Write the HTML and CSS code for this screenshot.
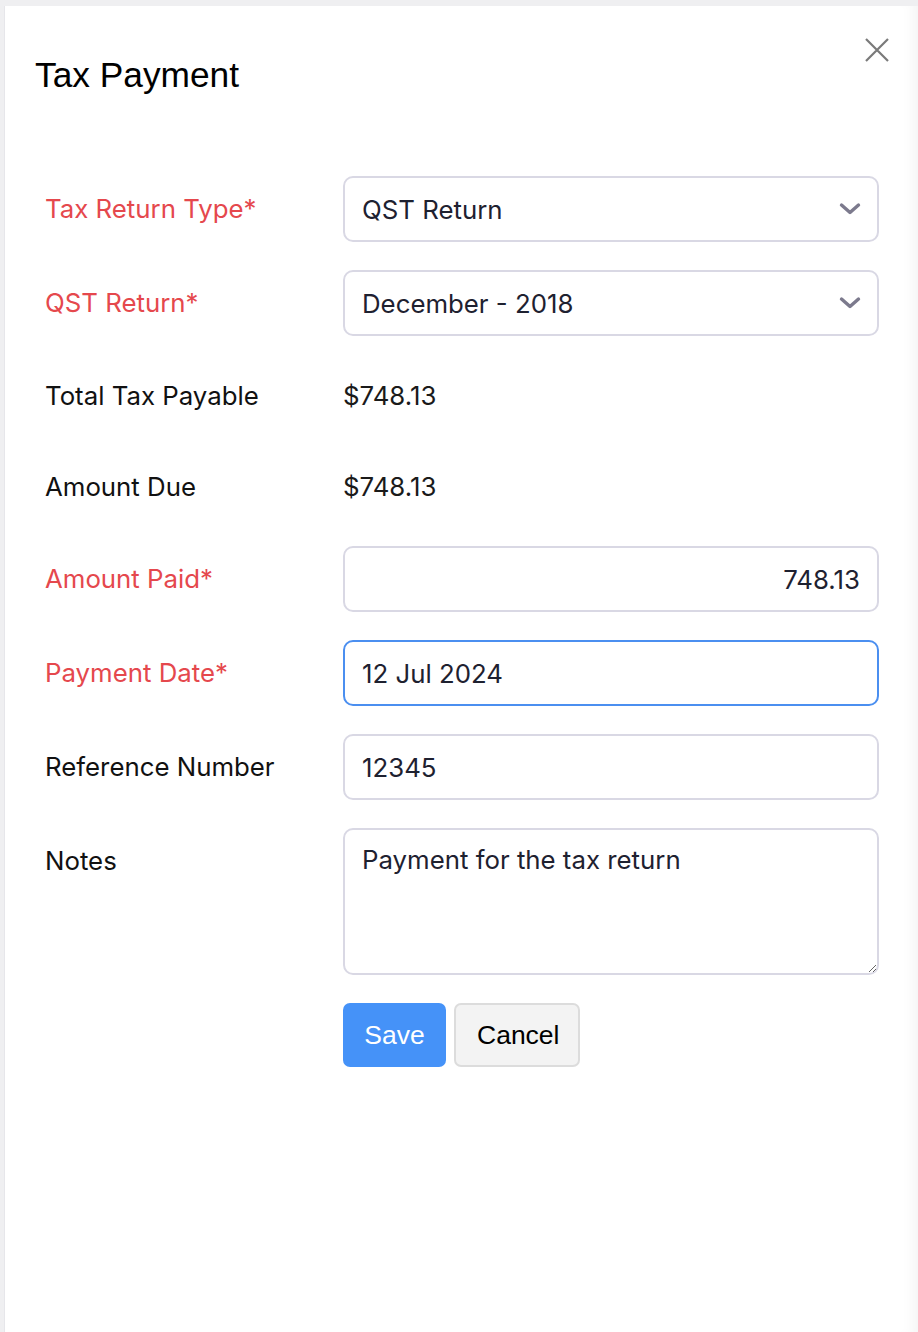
FILE: index.html
```html
<!DOCTYPE html>
<html lang="en">
<head>
<meta charset="utf-8">
<title>Tax Payment</title>
<link rel="stylesheet" href="styles.css">
</head>
<body>
<div class="panel">
  <button class="close" type="button" aria-label="Close">
    <svg width="26" height="26" viewBox="0 0 26 26"><path d="M2 2 L24 24 M24 2 L2 24" stroke="#7a7a7a" stroke-width="2.2" fill="none"/></svg>
  </button>
  <h1 class="title">Tax Payment</h1>
  <form class="form">
    <div class="row">
      <label class="label req">Tax Return Type*</label>
      <div class="field select">
        <span class="field-text">QST Return</span>
        <svg class="chev" width="22" height="14" viewBox="0 0 22 14"><path d="M2.5 3 L11 10.5 L19.5 3" stroke="#7c7a8d" stroke-width="3.4" fill="none" stroke-linecap="round" stroke-linejoin="round"/></svg>
      </div>
    </div>
    <div class="row">
      <label class="label req">QST Return*</label>
      <div class="field select">
        <span class="field-text">December - 2018</span>
        <svg class="chev" width="22" height="14" viewBox="0 0 22 14"><path d="M2.5 3 L11 10.5 L19.5 3" stroke="#7c7a8d" stroke-width="3.4" fill="none" stroke-linecap="round" stroke-linejoin="round"/></svg>
      </div>
    </div>
    <div class="row static">
      <span class="label">Total Tax Payable</span>
      <span class="value">$748.13</span>
    </div>
    <div class="row static">
      <span class="label">Amount Due</span>
      <span class="value">$748.13</span>
    </div>
    <div class="row">
      <label class="label req">Amount Paid*</label>
      <input class="field input right" type="text" value="748.13">
    </div>
    <div class="row">
      <label class="label req">Payment Date*</label>
      <input class="field input focus" type="text" value="12 Jul 2024">
    </div>
    <div class="row">
      <label class="label">Reference Number</label>
      <input class="field input" type="text" value="12345">
    </div>
    <div class="row">
      <label class="label">Notes</label>
      <textarea class="field area">Payment for the tax return</textarea>
    </div>
    <div class="row actions">
      <span class="label"></span>
      <div class="buttons">
        <button type="button" class="btn save">Save</button>
        <button type="button" class="btn cancel">Cancel</button>
      </div>
    </div>
  </form>
</div>
</body>
</html>
```

FILE: styles.css
```css
* { box-sizing: border-box; }

html, body {
  margin: 0;
  padding: 0;
}

body {
  background: #efeff1;
  font-family: Inter, "Noto Sans", sans-serif;
  overflow: hidden;
}

.panel {
  position: relative;
  margin: 6px 0 0 4px;
  min-height: 1326px;
  background: #fff;
  border-left: 1px solid #e6e6ea;
  box-shadow: inset -14px 0 14px -10px rgba(0, 0, 0, 0.05);
  padding: 49px 39px 0 0;
}

.close {
  position: absolute;
  top: 31px;
  right: 28px;
  width: 26px;
  height: 26px;
  padding: 0;
  border: 0;
  background: transparent;
  cursor: pointer;
}
.close svg { display: block; }

.title {
  margin: 0 0 0 30px;
  font-family: "Liberation Sans", Arial, sans-serif;
  font-weight: 400;
  font-size: 35.3px;
  line-height: 40px;
  color: #000;
}

.form {
  margin: 81px 0 0 40px;
}

.row {
  display: grid;
  grid-template-columns: 298px 1fr;
  margin-bottom: 28px;
  align-items: start;
}

.label {
  font-size: 25.8px;
  line-height: 66px;
  color: #111;
  white-space: nowrap;
}
.label.req { color: #e5484d; }

.row.static .label,
.row.static .value {
  line-height: 63px;
}
.value {
  font-size: 25.8px;
  color: #1a1a1a;
  padding-left: 0;
}

.field {
  width: 100%;
  height: 66px;
  border: 2px solid #d9d8e4;
  border-radius: 10px;
  background: #fff;
  font-family: Inter, "Noto Sans", sans-serif;
  font-size: 25.8px;
  color: #1e2130;
  padding: 0 17px;
  outline: none;
}

.select {
  display: flex;
  align-items: center;
  justify-content: space-between;
}
.chev { display: block; margin-right: -1px; }

.input.right { text-align: right; }
.input.focus { border-color: #4b8ff0; }

.area {
  height: 147px;
  padding: 14px 17px;
  line-height: 32px;
  resize: vertical;
  display: block;
}

.buttons {
  display: flex;
  gap: 8px;
}

.btn {
  height: 64px;
  font-family: "Liberation Sans", Arial, sans-serif;
  font-size: 26.5px;
  border-radius: 7px;
  cursor: pointer;
  padding: 0 21px;
}
.btn.save {
  width: 103px;
  background: #4592f8;
  color: #fff;
  border: 0;
}
.btn.cancel {
  width: 126px;
  background: #f3f3f3;
  color: #000;
  border: 2px solid #dcdcdc;
}
```
